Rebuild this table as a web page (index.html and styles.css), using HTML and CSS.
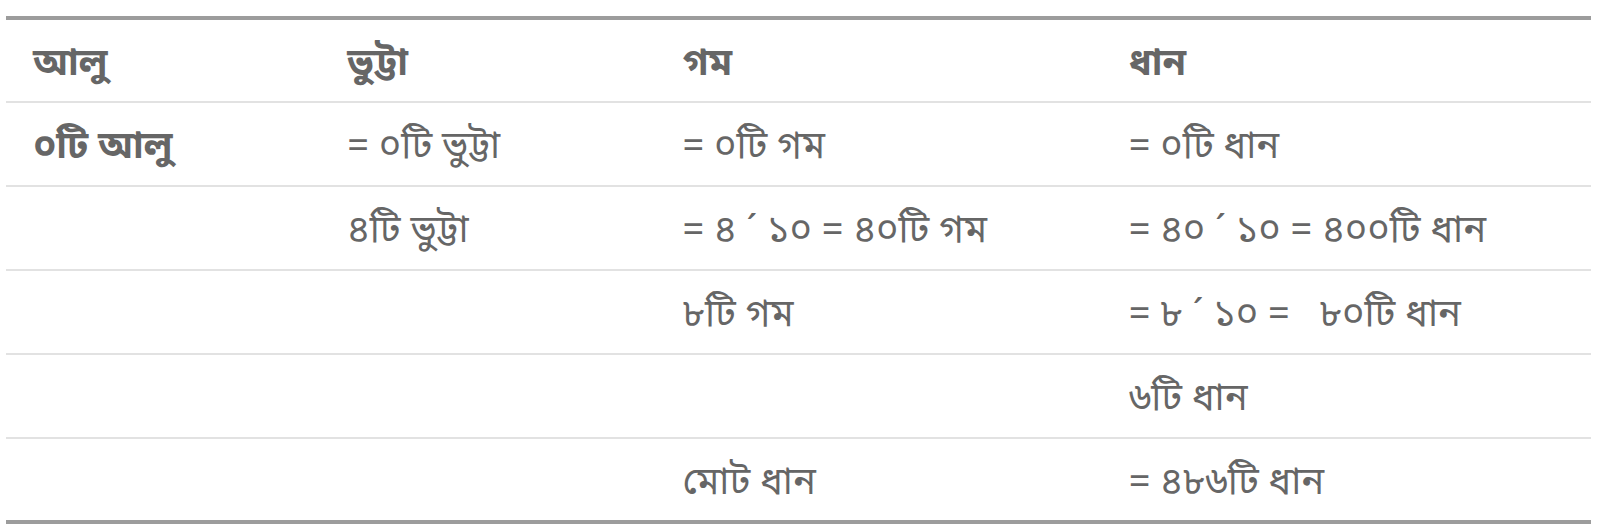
FILE: index.html
```html
<!DOCTYPE html>
<html lang="bn">
<head>
<meta charset="utf-8">
<link rel="stylesheet" href="styles.css">
</head>
<body>
<table class="calc">
  <thead>
    <tr><th class="c1">আলু</th><th class="c2">ভুট্টা</th><th class="c3">গম</th><th class="c4">ধান</th></tr>
  </thead>
  <tbody>
    <tr><td class="strong">০টি আলু</td><td>= ০টি ভুট্টা</td><td>= ০টি গম</td><td>= ০টি ধান</td></tr>
    <tr><td></td><td>৪টি ভুট্টা</td><td>= ৪ ´ ১০ = ৪০টি গম</td><td>= ৪০ ´ ১০ = ৪০০টি ধান</td></tr>
    <tr><td></td><td></td><td>৮টি গম</td><td>= ৮ ´ ১০ = &nbsp; ৮০টি ধান</td></tr>
    <tr><td></td><td></td><td></td><td>৬টি ধান</td></tr>
    <tr><td></td><td></td><td>মোট ধান</td><td>= ৪৮৬টি ধান</td></tr>
  </tbody>
</table>
</body>
</html>
```
FILE: styles.css
```css
html, body {
  margin: 0;
  padding: 0;
  background: #fff;
}
body {
  padding: 16px 10px 0 6px;
  font-family: "Noto Sans", "Noto Sans Bengali", sans-serif;
  color: #666;
}
.calc {
  width: 1585px;
  border-collapse: collapse;
  border-top: 4px solid #9c9c9c;
  border-bottom: 4px solid #9c9c9c;
  font-size: 38px;
  line-height: 1.2;
}
.calc th, .calc td {
  text-align: left;
  vertical-align: middle;
  padding: 0 0 0 27px;
}
.calc th {
  height: 81px;
  font-weight: bold;
  border-bottom: 2px solid #e2e2e2;
}
.calc td {
  height: 82px;
  font-weight: normal;
  border-bottom: 2px solid #e2e2e2;
}
.calc tbody tr:last-child td {
  border-bottom: none;
  height: 81px;
}
.calc td.strong {
  font-weight: bold;
}
.c1 { width: 287px; }
.c2 { width: 308px; }
.c3 { width: 419px; }
.c4 { width: 462px; }
```
